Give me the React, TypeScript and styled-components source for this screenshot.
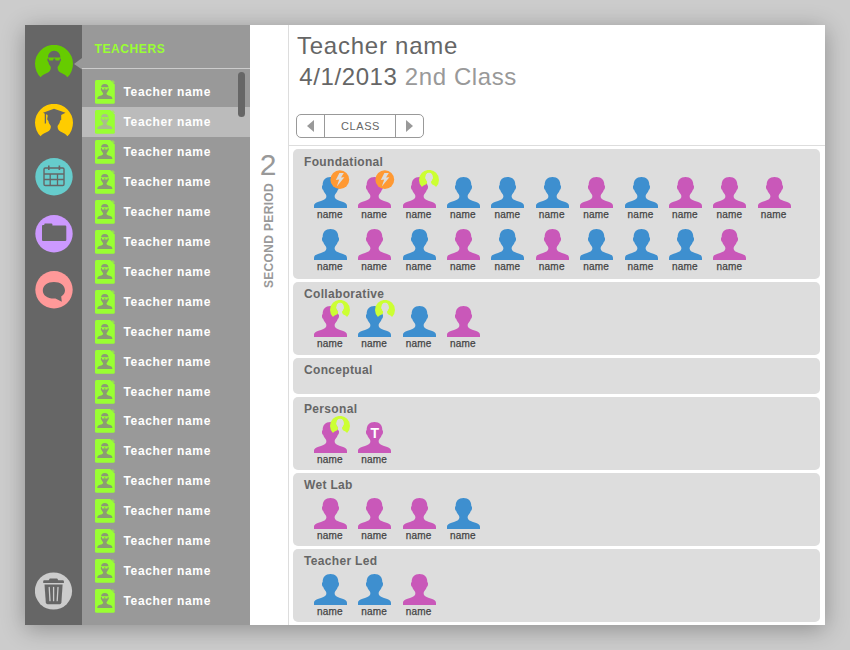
import React from "react";
import styled, { createGlobalStyle, css } from "styled-components";

const GlobalStyle = createGlobalStyle`
  * { box-sizing: border-box; }
  html, body { margin: 0; height: 650px; overflow: hidden; background: #cccccc; }
  body { font-family: "Liberation Sans", Arial, sans-serif; color: #666; }
`;

const Stage = styled.div`
  width: 850px;
  height: 650px;
  padding: 25px;
  background: #cccccc;
`;

const Window = styled.div`
  display: flex;
  width: 800px;
  height: 600px;
  background: #fff;
  box-shadow: 0 4px 22px rgba(0, 0, 0, 0.3);
`;

const Sidebar = styled.nav`
  flex: none;
  width: 57px;
  padding: 20px 0 15px 10px;
  display: flex;
  flex-direction: column;
  background: #666;
`;

const NavButton = styled.button<{ $gap?: number; $last?: boolean }>`
  display: block;
  width: 38px;
  height: 38px;
  padding: 0;
  border: 0;
  background: none;
  margin-top: ${(p) => (p.$last ? "auto" : `${p.$gap ?? 0}px`)};
  svg { display: block; }
`;

const TeacherPane = styled.aside`
  position: relative;
  flex: none;
  width: 168px;
  background: #999;
`;

const Pointer = styled.svg`
  position: absolute;
  left: -8px;
  top: 33px;
`;

const PaneTitle = styled.h2`
  height: 44px;
  margin: 0;
  padding: 0 0 0 12.5px;
  border-bottom: 1px solid #ccc;
  font-size: 12px;
  line-height: 48px;
  letter-spacing: 0.6px;
  color: #99ff33;
`;

const TeacherList = styled.ul`
  list-style: none;
  margin: 0;
  padding: 8px 0 0;
`;

const TeacherRow = styled.li<{ $active: boolean }>`
  display: flex;
  align-items: center;
  gap: 8.5px;
  height: 29.96px;
  padding-left: 13px;
  font-size: 12px;
  font-weight: bold;
  letter-spacing: 0.64px;
  color: #fff;
  background: ${(p) => (p.$active ? "#bbb" : "transparent")};
`;

const ScrollThumb = styled.div`
  position: absolute;
  left: 155.5px;
  top: 47px;
  width: 7px;
  height: 45px;
  border-radius: 4px;
  background: #666;
`;

const PeriodRail = styled.section`
  flex: none;
  width: 39px;
  padding: 122px 2px 0 0;
  display: flex;
  flex-direction: column;
  align-items: center;
  border-right: 1px solid #ddd;
  color: #999;
`;

const PeriodNumber = styled.div`
  font-size: 30px;
  line-height: 36px;
`;

const PeriodLabel = styled.div`
  writing-mode: vertical-rl;
  transform: rotate(180deg);
  margin-left: 2px;
  font-size: 12px;
  line-height: 16px;
  font-weight: bold;
  letter-spacing: 0.34px;
`;

const Main = styled.main`
  flex: 1;
  min-width: 0;
`;

const Header = styled.header`
  height: 121px;
  padding: 5px 0 0 7px;
  border-bottom: 1px solid #ddd;
`;

const HeaderLine = styled.div<{ $indent: number; $spacing: number; $height: number }>`
  padding-left: ${(p) => p.$indent}px;
  font-size: 24px;
  line-height: ${(p) => p.$height}px;
  letter-spacing: ${(p) => p.$spacing}px;
  color: #666;
`;

const Muted = styled.span`
  color: #999;
`;

const Stepper = styled.div`
  display: flex;
  width: 128px;
  height: 24px;
  margin-top: 22px;
  border: 1px solid #999;
  border-radius: 5px;
`;

const stepCell = css`
  display: flex;
  align-items: center;
  justify-content: center;
  padding: 0;
  border: 0;
  background: none;
`;

const StepButton = styled.button`
  ${stepCell}
  width: 27px;
`;

const StepLabel = styled.div`
  ${stepCell}
  flex: 1;
  padding-left: 1px;
  border: solid #999;
  border-width: 0 1px;
  font-size: 11px;
  letter-spacing: 0.55px;
`;

const Groups = styled.div`
  display: flex;
  flex-direction: column;
  gap: 2.5px;
  padding: 3px 5px 0 4px;
`;

const Group = styled.section<{ $height: number; $top: number }>`
  height: ${(p) => p.$height}px;
  padding: ${(p) => p.$top}px 0 0 11px;
  border-radius: 5px;
  background: #ddd;
`;

const GroupTitle = styled.h3`
  margin: 0;
  font-size: 12px;
  line-height: 14px;
  letter-spacing: 0.33px;
  color: #666;
`;

const Students = styled.div<{ $top: number }>`
  display: grid;
  grid-template-columns: repeat(11, 44.4px);
  grid-auto-rows: 52px;
  padding: ${(p) => p.$top}px 0 0 9.8px;
`;

const StudentCell = styled.div`
  position: relative;
  width: 34px;
  svg { display: block; }
`;

const StudentName = styled.div`
  width: 32px;
  margin-top: 1px;
  font-size: 10px;
  line-height: 12px;
  letter-spacing: 0.2px;
  text-align: center;
  color: #444;
  -webkit-text-stroke: 0.25px #444;
`;

const Badge = styled.svg`
  position: absolute;
  left: 16.4px;
  top: -6.4px;
`;

const Letter = styled.span`
  position: absolute;
  left: 0;
  top: 4px;
  width: 33px;
  text-align: center;
  font-size: 14px;
  line-height: 15px;
  font-weight: bold;
  color: #fff;
`;

const PERSON =
  "M16.5 0C21.6 0 24.4 3 24.3 8C25.5 8.8 25.1 12.2 23.9 12.8C23 15.8 20.9 17 20.6 19C20.5 21.6 22.4 22.8 26 23.9C30.8 25.3 33 26.2 33 29V31H0V29C0 26.2 2.2 25.3 7 23.9C10.6 22.8 12.5 21.6 12.4 19C12.1 17 10 15.8 9.1 12.8C7.9 12.2 7.5 8.8 8.7 8C8.6 3 11.4 0 16.5 0Z";

const HALO =
  "M5.6 32.3A19 19 0 1 1 32.4 32.3C31 30 28 28.7 25.4 27.4C23 26.2 22.5 24 22.6 22C23.6 20.5 24.8 19 25 17C26.1 16.5 26.4 13.6 25.4 13C25.6 9 23 5.8 19.2 5.8C15.4 5.8 12.8 9 13 13C12 13.6 12.3 16.5 13.4 17C13.6 19 14.8 20.5 15.8 22C15.9 24 15.4 26.2 13 27.4C10.4 28.7 7 30 5.6 32.3Z";

const TeachersIcon = () => (
  <svg width="38" height="38" viewBox="0 0 38 38">
    <path d={HALO} fill="#66cc00" />
    <path d="M12.6 12.4H26V13.4H25L24.3 15.6H20.6L20 13.6H18.7L18 15.6H14.3L13.6 13.4H12.6Z" fill="#66cc00" />
  </svg>
);

const StudentsIcon = () => (
  <svg width="38" height="38" viewBox="0 0 38 38">
    <path d={HALO} fill="#ffcc00" />
    <path d="M8 8.8L19 4.7L30.5 8.8L26.2 11V16H12.6V11Z" fill="#666" />
    <path d="M10.4 9V19.5" stroke="#666" strokeWidth="1.3" />
  </svg>
);

const CalendarIcon = () => (
  <svg width="38" height="38" viewBox="0 0 38 38" fill="none" stroke="#666">
    <circle cx="19" cy="18.7" r="18.7" fill="#66cccc" stroke="none" />
    <rect x="9" y="10" width="20" height="17.5" rx="1.3" strokeWidth="1.4" />
    <path d="M9 16H29M9 21.5H29M15.2 16V27.5M22.5 16V27.5" strokeWidth="1.3" />
    <path d="M13.8 7.6V12M24.4 7.6V12" strokeWidth="1.6" />
  </svg>
);

const FolderIcon = () => (
  <svg width="38" height="38" viewBox="0 0 38 38">
    <circle cx="19" cy="18.7" r="18.7" fill="#cc99ff" />
    <path d="M7 10.7Q7 10 8 10H9.3V9.2Q9.3 8.4 10 8.4H16.5Q17.4 8.4 17.4 9.2V10.6H30.2Q31.3 10.6 31.3 11.6V25Q31.3 26 30.2 26H8Q7 26 7 25Z" fill="#666" />
  </svg>
);

const ChatIcon = () => (
  <svg width="38" height="38" viewBox="0 0 38 38">
    <circle cx="19" cy="18.8" r="18.7" fill="#ff9999" />
    <path d="M18.9 11C25.2 11 30 14.5 30 19.4C30 21.8 28.4 24 26.2 25.4L26.8 30.8L20.5 27.4C13 28 7.8 24.5 7.8 19.4C7.8 14.5 12.8 11 18.9 11Z" fill="#666" />
  </svg>
);

const TrashIcon = () => (
  <svg width="38" height="38" viewBox="0 0 38 38">
    <circle cx="18.5" cy="19" r="18.6" fill="#ccc" />
    <path d="M8.2 9.3Q8.2 8.3 9.2 8.3H13.7L14.8 6.5H22.2L23.3 8.3H27.8Q28.9 8.3 28.9 9.3V10.9H8.2Z" fill="#666" />
    <path d="M9.5 12.6H27.6L26.4 30.6Q26.2 32.3 24.7 32.3H12.6Q11.1 32.3 10.8 30.6Z" fill="#666" />
    <path d="M14.2 15.3L15 28.7M18.6 15.3V28.7M23 15.3L22.2 28.7" stroke="#ccc" strokeWidth="1.3" strokeLinecap="round" />
  </svg>
);

const TeacherCard = ({ active }: { active: boolean }) => (
  <svg width="20" height="24" viewBox="0 0 20 24">
    <path d="M1.5 0H15.2L19.8 4.4V22.3Q19.8 23.8 18.3 23.8H1.5Q0 23.8 0 22.3V1.5Q0 0 1.5 0Z" fill="#99ff33" />
    <path d="M16.6 0.2H18.2L19.7 1.7V3.1H18Q16.8 3.1 16.6 2Z" fill="#99ff33" opacity="0.55" />
    <path
      d="M9.8 4C12.4 4 13.7 5.5 13.5 8.2C14.1 9 13.7 10.6 13 10.8C12.6 12.4 11.5 12.8 11.5 13.8C11.6 15 12.9 15.3 14.5 15.8C16.5 16.5 17.4 17 17.4 19H2.3C2.3 17 3.2 16.5 5.2 15.8C6.8 15.3 8.1 15 8.1 13.8C8.1 12.8 7 12.4 6.6 10.8C5.9 10.6 5.5 9 6.1 8.2C5.9 5.5 7.2 4 9.8 4Z"
      fill={active ? "#a9bd8c" : "#8b9b73"}
    />
    <path d="M5.8 7.3H13.8V8H12.8L12.4 9.6H10.2V8H9.4V9.6H7.2L6.8 8H5.8Z" fill="#99ff33" />
  </svg>
);

type BadgeKind = "bolt" | "helper";

const StudentBadge = ({ kind }: { kind: BadgeKind }) =>
  kind === "bolt" ? (
    <Badge width="20" height="20" viewBox="0 0 20 20">
      <circle cx="9.8" cy="9.7" r="9.4" fill="#ff9933" />
      <path d="M9.4 3L5.8 10L9.2 9.6L6.8 16.4L14.4 7.2L11 7.6L13.8 3Z" fill="#ddd" />
    </Badge>
  ) : (
    <Badge width="20" height="20" viewBox="0 0 38 38">
      <path d={HALO} fill="#ccff33" />
      <path d="M19.2 5.4C23.5 5.4 26.2 8.6 26 13C26.8 14 26.4 17 25.3 17.4C24.8 19.4 23.2 20.6 22.8 22L23.4 27H15L15.6 22C15.2 20.6 13.6 19.4 13.1 17.4C12 17 11.6 14 12.4 13C12.2 8.6 14.9 5.4 19.2 5.4Z" fill="#ddd" />
    </Badge>
  );

interface Student {
  color: "b" | "p";
  badge?: BadgeKind;
  letter?: string;
}

const roster = (
  colors: string,
  extras: Record<number, Partial<Student>> = {}
): Student[] => colors.split("").map((c, i) => ({ color: c as "b" | "p", ...extras[i] }));

interface GroupData {
  title: string;
  height: number;
  top: number;
  gap: number;
  students: Student[];
}

const groups: GroupData[] = [
  {
    title: "Foundational",
    height: 130,
    top: 6,
    gap: 7.7,
    students: roster("bppbbbpbpppbpbpbpbbbp", {
      0: { badge: "bolt" },
      1: { badge: "bolt" },
      2: { badge: "helper" },
    }),
  },
  {
    title: "Collaborative",
    height: 73.5,
    top: 5.5,
    gap: 5,
    students: roster("pbbp", { 0: { badge: "helper" }, 1: { badge: "helper" } }),
  },
  { title: "Conceptual", height: 36.5, top: 5.5, gap: 0, students: [] },
  {
    title: "Personal",
    height: 73.5,
    top: 5.5,
    gap: 6,
    students: roster("pp", { 0: { badge: "helper" }, 1: { letter: "T" } }),
  },
  { title: "Wet Lab", height: 73.5, top: 5.5, gap: 6, students: roster("pppb") },
  { title: "Teacher Led", height: 73.5, top: 5.5, gap: 6, students: roster("bbp") },
];

const StudentTile = ({ student }: { student: Student }) => (
  <StudentCell>
    <svg width="34" height="31" viewBox="0 0 34 31">
      <path d={PERSON} fill={student.color === "b" ? "#3e8fcf" : "#c958b9"} />
    </svg>
    {student.badge && <StudentBadge kind={student.badge} />}
    {student.letter && <Letter>{student.letter}</Letter>}
    <StudentName>name</StudentName>
  </StudentCell>
);

export default function App() {
  return (
    <Stage>
      <GlobalStyle />
      <Window>
        <Sidebar>
          <NavButton aria-label="Teachers"><TeachersIcon /></NavButton>
          <NavButton aria-label="Students" $gap={21}><StudentsIcon /></NavButton>
          <NavButton aria-label="Calendar" $gap={16}><CalendarIcon /></NavButton>
          <NavButton aria-label="Folders" $gap={19}><FolderIcon /></NavButton>
          <NavButton aria-label="Messages" $gap={18}><ChatIcon /></NavButton>
          <NavButton aria-label="Trash" $last><TrashIcon /></NavButton>
        </Sidebar>
        <TeacherPane>
          <Pointer width="8" height="12" viewBox="0 0 8 12">
            <path d="M8 0V11.5L0 6Z" fill="#999" />
          </Pointer>
          <PaneTitle>TEACHERS</PaneTitle>
          <TeacherList>
            {Array.from({ length: 18 }, (_, i) => (
              <TeacherRow key={i} $active={i === 1}>
                <TeacherCard active={i === 1} />
                Teacher name
              </TeacherRow>
            ))}
          </TeacherList>
          <ScrollThumb />
        </TeacherPane>
        <PeriodRail>
          <PeriodNumber>2</PeriodNumber>
          <PeriodLabel>SECOND PERIOD</PeriodLabel>
        </PeriodRail>
        <Main>
          <Header>
            <HeaderLine $indent={1} $spacing={0.75} $height={32}>Teacher name</HeaderLine>
            <HeaderLine $indent={3.3} $spacing={0.6} $height={30}>
              4/1/2013 <Muted>2nd Class</Muted>
            </HeaderLine>
            <Stepper>
              <StepButton aria-label="Previous">
                <svg width="7" height="12" viewBox="0 0 7 12"><path d="M7 0V12L0 6Z" fill="#999" /></svg>
              </StepButton>
              <StepLabel>CLASS</StepLabel>
              <StepButton aria-label="Next">
                <svg width="7" height="12" viewBox="0 0 7 12"><path d="M0 0V12L7 6Z" fill="#999" /></svg>
              </StepButton>
            </Stepper>
          </Header>
          <Groups>
            {groups.map((g) => (
              <Group key={g.title} $height={g.height} $top={g.top}>
                <GroupTitle>{g.title}</GroupTitle>
                {g.students.length > 0 && (
                  <Students $top={g.gap}>
                    {g.students.map((s, i) => (
                      <StudentTile key={i} student={s} />
                    ))}
                  </Students>
                )}
              </Group>
            ))}
          </Groups>
        </Main>
      </Window>
    </Stage>
  );
}
